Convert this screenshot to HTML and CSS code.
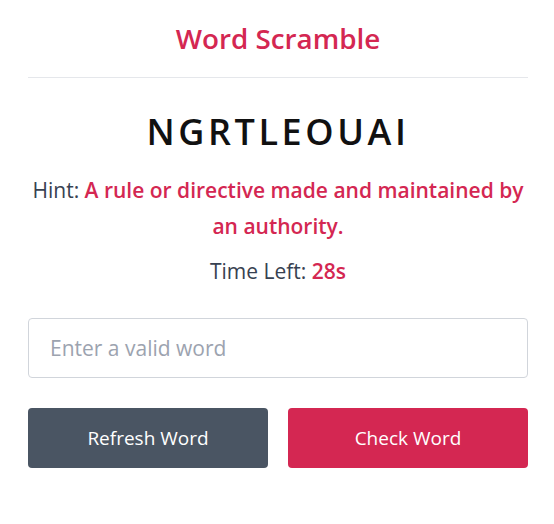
FILE: index.html
```html
<!DOCTYPE html>
<html>
<head>
<meta charset="utf-8">
<link rel="stylesheet" href="styles.css">
</head>
<body>
<div class="wrap">
  <h1 class="title">Word Scramble</h1>
  <div class="content">
    <p class="word">NGRTLEOUAI</p>
    <div class="details">
      <p class="hint">Hint: <span class="accent">A rule or directive made and maintained by an authority.</span></p>
      <p class="time">Time Left: <span class="accent">28s</span></p>
    </div>
    <input class="field" type="text" placeholder="Enter a valid word">
    <div class="buttons">
      <button class="btn btn-gray">Refresh Word</button>
      <button class="btn btn-red">Check Word</button>
    </div>
  </div>
</div>
</body>
</html>
```
FILE: styles.css
```css
* { box-sizing: border-box; }
body {
  margin: 0;
  padding-left: 2px;
  background: #fff;
  font-family: "Open Sans", "Noto Sans", sans-serif;
  color: #374151;
}
.wrap {
  width: 500px;
  margin: 0 auto;
}
.title {
  margin: 0;
  padding: 18px 0 19px;
  text-align: center;
  font-size: 27.8px;
  font-weight: 600;
  color: #d42752;
  line-height: 40px;
  border-bottom: 1px solid #e5e7eb;
}
.content {
  display: flex;
  flex-direction: column;
}
.word {
  margin: 28px 0 0;
  text-align: center;
  font-size: 36px;
  font-weight: 600;
  letter-spacing: 3.6px;
  color: #111;
  line-height: 52px;
}
.details {
  margin-top: 14px;
  text-align: center;
  font-size: 21px;
}
.hint {
  margin: 0;
  line-height: 36px;
}
.time {
  margin: 9px 0 0;
  line-height: 36px;
}
.accent {
  color: #d42752;
  font-weight: 600;
}
.field {
  margin-top: 29px;
  height: 60px;
  width: 100%;
  border: 1px solid #d1d5db;
  border-radius: 4px;
  padding: 0 21px;
  font-family: inherit;
  font-size: 21px;
  color: #374151;
  outline: none;
}
.field::placeholder { color: #9ca3af; }
.buttons {
  margin-top: 30px;
  display: grid;
  grid-template-columns: 1fr 1fr;
  gap: 20px;
}
.btn {
  height: 60px;
  border: none;
  border-radius: 4px;
  font-family: inherit;
  font-size: 19px;
  color: #fff;
}
.btn-gray { background: #4a5563; }
.btn-red { background: #d42752; }
```
